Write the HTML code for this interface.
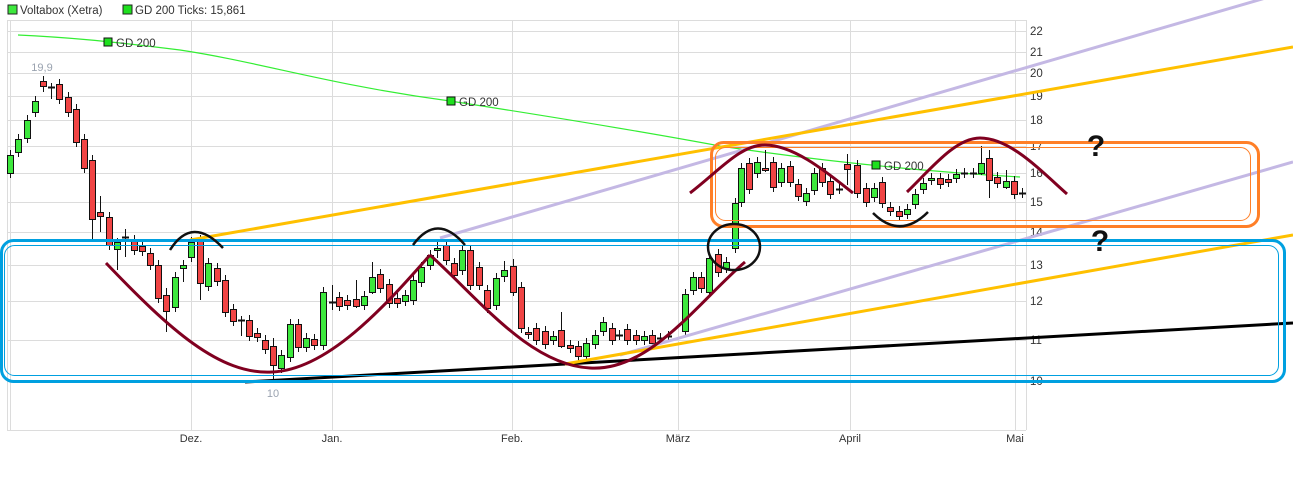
<!DOCTYPE html>
<html><head><meta charset="utf-8"><style>
html,body{margin:0;padding:0;background:#fff;width:1293px;height:487px;overflow:hidden}
svg{display:block;font-family:"Liberation Sans",sans-serif}
</style></head><body>
<svg id="s" width="1293" height="487" viewBox="0 0 1293 487" xmlns="http://www.w3.org/2000/svg">
<rect x="8" y="5" width="9" height="9" fill="#3de83d" stroke="#222" stroke-width="1"/>
<text x="20" y="14" font-size="11.5" fill="#333">Voltabox (Xetra)</text>
<rect x="123" y="5" width="9" height="9" fill="#1ee01e" stroke="#222" stroke-width="1"/>
<text x="135" y="14" font-size="11.5" fill="#333">GD 200 Ticks: 15,861</text>
<g stroke="#dcdcdc" stroke-width="1">
<line x1="7" y1="20.5" x2="1026" y2="20.5"/>
<line x1="7" y1="430.5" x2="1026" y2="430.5"/>
<line x1="7.5" y1="20" x2="7.5" y2="430"/>
<line x1="10.5" y1="20" x2="10.5" y2="430"/>
<line x1="1026.5" y1="20" x2="1026.5" y2="430"/>
<line x1="191.5" y1="20" x2="191.5" y2="430"/>
<line x1="332.5" y1="20" x2="332.5" y2="430"/>
<line x1="512.5" y1="20" x2="512.5" y2="430"/>
<line x1="678.5" y1="20" x2="678.5" y2="430"/>
<line x1="850.5" y1="20" x2="850.5" y2="430"/>
<line x1="1015.5" y1="20" x2="1015.5" y2="430"/>
<line x1="7" y1="31.5" x2="1026" y2="31.5"/>
<line x1="7" y1="52.5" x2="1026" y2="52.5"/>
<line x1="7" y1="73.5" x2="1026" y2="73.5"/>
<line x1="7" y1="96.5" x2="1026" y2="96.5"/>
<line x1="7" y1="120.5" x2="1026" y2="120.5"/>
<line x1="7" y1="146.5" x2="1026" y2="146.5"/>
<line x1="7" y1="173.5" x2="1026" y2="173.5"/>
<line x1="7" y1="202.5" x2="1026" y2="202.5"/>
<line x1="7" y1="232.5" x2="1026" y2="232.5"/>
<line x1="7" y1="265.5" x2="1026" y2="265.5"/>
<line x1="7" y1="301.5" x2="1026" y2="301.5"/>
<line x1="7" y1="340.5" x2="1026" y2="340.5"/>
<line x1="7" y1="381.5" x2="1026" y2="381.5"/>
</g>
<g font-size="11.5" fill="#333">
<text x="1030" y="35">22</text><text x="1030" y="56">21</text><text x="1030" y="77">20</text>
<text x="1030" y="100">19</text><text x="1030" y="124">18</text><text x="1030" y="150">17</text>
<text x="1030" y="177">16</text><text x="1030" y="206">15</text><text x="1030" y="236">14</text>
<text x="1030" y="269">13</text><text x="1030" y="305">12</text><text x="1030" y="344">11</text>
<text x="1030" y="385">10</text>
</g>
<g font-size="11" fill="#333" text-anchor="middle">
<text x="191" y="442">Dez.</text><text x="332" y="442">Jan.</text><text x="512" y="442">Feb.</text>
<text x="678" y="442">März</text><text x="850" y="442">April</text><text x="1015" y="442">Mai</text>
</g>
<path d="M18,35 C60,37 100,40 180,50 C260,62 330,85 450,101 C560,118 650,133 720,146 C800,158 900,170 1020,177" fill="none" stroke="#33ee33" stroke-width="1.2"/>
<g id="candles"></g>
<text x="42" y="71" font-size="11" fill="#9aa3b0" text-anchor="middle">19,9</text>
<text x="273" y="397" font-size="11" fill="#9aa3b0" text-anchor="middle">10</text>
<g font-size="11.5" fill="#333">
<rect x="104" y="38" width="8" height="8" fill="#1ee01e" stroke="#111"/><text x="116" y="47">GD 200</text>
<rect x="447" y="97" width="8" height="8" fill="#1ee01e" stroke="#111"/><text x="459" y="106">GD 200</text>
<rect x="872" y="161" width="8" height="8" fill="#1ee01e" stroke="#111"/><text x="884" y="170">GD 200</text>
</g>
<g fill="none" stroke-linecap="butt">
<line x1="245" y1="382" x2="1293" y2="323" stroke="#000" stroke-width="3"/>
<line x1="440" y1="238" x2="1293" y2="-10" stroke="#c4b8e4" stroke-width="3"/>
<line x1="620" y1="355" x2="1293" y2="162" stroke="#c4b8e4" stroke-width="3"/>
<line x1="190" y1="240" x2="1293" y2="47" stroke="#ffc000" stroke-width="3"/>
<line x1="565" y1="364" x2="1293" y2="235" stroke="#ffc000" stroke-width="3"/>
<rect x="1.5" y="240.5" width="1283" height="141" rx="12" stroke="#00a0e0" stroke-width="3"/>
<rect x="4.5" y="245.5" width="1274" height="130" rx="10" stroke="#00a0e0" stroke-width="1"/>
<rect x="711.5" y="142.5" width="547" height="84" rx="12" stroke="#ff7f27" stroke-width="3"/>
<rect x="715.5" y="147.5" width="535" height="73" rx="10" stroke="#ff7f27" stroke-width="1"/>
<g stroke="#800020" stroke-width="3">
<path d="M106,263 C170,330 220,375 272,372 C330,370 390,300 430,255"/>
<path d="M430,255 C480,300 530,365 590,368 C650,372 700,300 745,262"/>
<path d="M690,193 C720,170 740,145 765,145 C795,145 830,175 853,193"/>
<path d="M907,192 C930,170 955,138 980,138 C1010,138 1040,170 1067,194"/>
</g>
<g stroke="#111" stroke-width="2.5">
<path d="M170,250 Q192,215 223,248"/>
<path d="M413,245 Q437,212 465,245"/>
<path d="M873,213 Q900,240 928,212"/>
<ellipse cx="734" cy="247" rx="26" ry="23"/>
</g>
</g>
<text x="1096" y="156" font-size="30" font-weight="bold" fill="#111" text-anchor="middle">?</text>
<text x="1100" y="251" font-size="30" font-weight="bold" fill="#111" text-anchor="middle">?</text>
</svg>
<script>
var C=[[10,155,173,'g'],[18,139,152,'g'],[27,120,138,'g'],[35,101,112,'g'],[43,81,86,'r',76,92],[51,87,87,'c',83,99],[59,84,99,'r'],[68,97,112,'r'],[76,109,142,'r'],[84,139,168,'r'],[92,160,219,'r',155,240],[100,212,216,'r',196,232],[109,217,245,'r'],[117,242,249,'g',238,270],[125,237,237,'c',229,257],[134,240,250,'r'],[142,246,251,'r'],[150,253,265,'r'],[158,265,298,'r'],[166,295,311,'r',288,332],[175,277,307,'g'],[183,265,268,'g',260,282],[191,242,257,'g'],[200,240,283,'r',235,300],[208,263,286,'g'],[217,268,281,'r'],[225,280,312,'r'],[233,309,321,'r'],[241,320,320,'c',316,336],[249,320,336,'r'],[257,333,337,'r'],[265,340,349,'r'],[273,346,365,'r',338,381],[281,355,368,'g'],[290,324,357,'g'],[298,324,347,'r'],[306,338,347,'g'],[314,339,345,'r'],[323,292,345,'g'],[332,302,302,'c',285,310],[339,297,306,'r'],[347,300,305,'r'],[356,299,306,'r',280,308],[364,296,305,'g'],[372,277,292,'g',262,294],[380,274,288,'r'],[389,284,303,'r'],[397,298,303,'r'],[405,295,301,'g'],[413,280,300,'g'],[421,267,282,'g'],[430,255,265,'g'],[437,248,250,'g',240,258],[446,245,260,'r'],[454,263,275,'r'],[462,250,270,'g'],[470,250,285,'r'],[479,267,285,'r'],[487,290,308,'r'],[496,278,305,'g'],[504,270,276,'g',261,282],[513,266,292,'r',259,296],[521,287,328,'r'],[528,332,334,'r'],[536,328,340,'r'],[545,331,344,'r'],[553,336,340,'g'],[561,330,346,'r',312,348],[570,345,348,'r'],[578,346,356,'r'],[586,343,356,'g'],[595,335,344,'g'],[603,322,331,'g'],[612,328,340,'r'],[619,335,335,'c'],[627,329,340,'r'],[636,335,340,'r'],[644,336,340,'g'],[652,335,343,'r'],[660,338,338,'c'],[668,336,336,'c'],[685,294,331,'g'],[693,277,290,'g'],[701,277,288,'r'],[709,258,292,'g'],[718,254,272,'r'],[726,262,268,'g'],[735,203,248,'g'],[741,168,202,'g'],[749,163,189,'r'],[757,162,173,'g'],[765,168,169,'r',150,172],[773,162,187,'r'],[781,168,182,'g'],[790,166,182,'r'],[798,184,196,'r'],[806,193,201,'g'],[814,173,190,'g'],[822,168,182,'r'],[830,181,194,'r'],[839,189,189,'c'],[847,164,169,'r',154,185],[857,165,193,'r'],[866,188,202,'r'],[874,188,197,'g'],[882,182,203,'r'],[890,207,211,'r'],[899,211,216,'r'],[907,209,214,'g'],[915,194,204,'g'],[923,183,189,'g'],[931,178,180,'g'],[940,178,184,'r'],[948,179,182,'r'],[956,174,178,'g'],[964,173,173,'c'],[973,173,173,'c'],[981,163,173,'g',146,175],[989,158,180,'r',150,198],[997,177,183,'r'],[1006,181,187,'g',170,189],[1014,181,194,'r'],[1022,193,193,'c']];
var ns="http://www.w3.org/2000/svg",g=document.getElementById('candles'),h='';
C.forEach(function(c){var x=c[0],t=c[1],b=c[2],k=c[3],hi=c[4]||t-5,lo=c[5]||b+5;
h+='<line x1="'+(x+0.5)+'" y1="'+hi+'" x2="'+(x+0.5)+'" y2="'+lo+'" stroke="#111" stroke-width="1"/>';
if(k=='c'){h+='<line x1="'+(x-3)+'" y1="'+(t+0.5)+'" x2="'+(x+4)+'" y2="'+(t+0.5)+'" stroke="#111" stroke-width="2"/>';}
else{h+='<rect x="'+(x-2.5)+'" y="'+(t+0.5)+'" width="6" height="'+Math.max(2,b-t)+'" fill="'+(k=='g'?'#3de83d':'#f04444')+'" stroke="#111" stroke-width="1"/>';}
});
g.innerHTML=h;
</script>
</body></html>
